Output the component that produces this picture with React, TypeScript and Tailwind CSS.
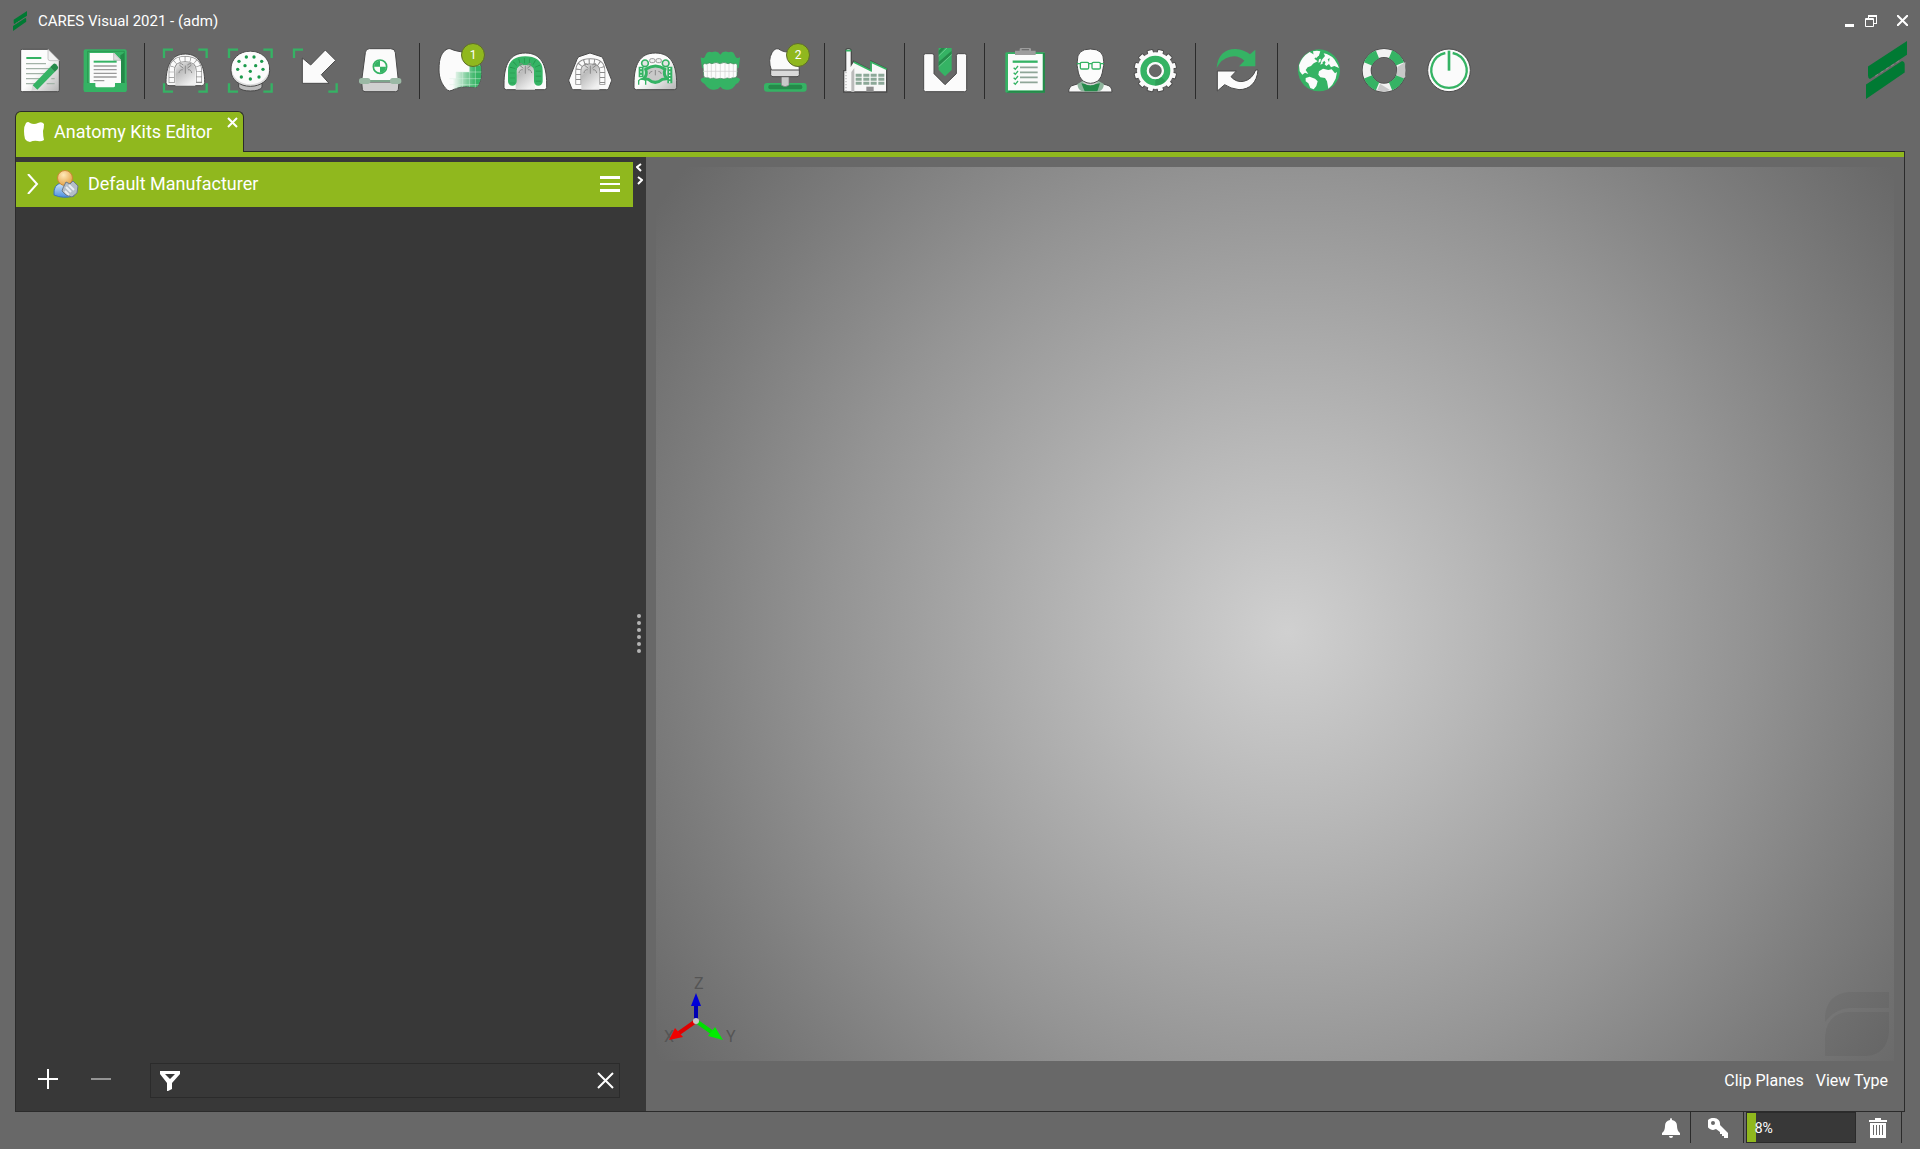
import React, { ReactNode, useState } from "react"

const GREEN = "#35b364"
const DARK_GREEN = "#258a4a"
const LINE = "#4a4a4a"

const Svg = ({ children }: { children: ReactNode }) => (
    <svg viewBox="0 0 132 132" className="size-11 overflow-visible" fill="none" aria-hidden="true">
        {children}
    </svg>
)

const Brackets = ({ diagonal = false }: { diagonal?: boolean }) => (
    <path
        d={diagonal ? "M3 30V5H30M131 106V131H106" : "M3 30V5H30M106 5H131V30M131 106V131H106M30 131H3V106"}
        stroke={GREEN}
        strokeWidth="7"
    />
)

const Shades = () => (
    <svg className="absolute size-0" aria-hidden="true">
        <defs>
            <linearGradient id="paper" x1="0" y1="0" x2="1" y2="1">
                <stop offset="0.5" stopColor="#fcfcfc" />
                <stop offset="1" stopColor="#b4b4b4" />
            </linearGradient>
            <linearGradient id="plaster" x1="0" y1="0" x2="0.6" y2="1">
                <stop offset="0" stopColor="#f4f4f4" />
                <stop offset="0.4" stopColor="#bcbcbc" />
                <stop offset="1" stopColor="#f0f0f0" />
            </linearGradient>
            <linearGradient id="mesh" x1="0" y1="0" x2="1" y2="0">
                <stop offset="0.1" stopColor={GREEN} stopOpacity="0" />
                <stop offset="0.8" stopColor={GREEN} />
            </linearGradient>
            <radialGradient id="head" cx="0.4" cy="0.3" r="0.8">
                <stop offset="0" stopColor="#ffe9b8" />
                <stop offset="1" stopColor="#e09b3c" />
            </radialGradient>
            <linearGradient id="body" x1="0" y1="0" x2="0" y2="1">
                <stop offset="0" stopColor="#d3e8fb" />
                <stop offset="1" stopColor="#4a8fe0" />
            </linearGradient>
        </defs>
    </svg>
)

const Palate = () => (
    <path
        d="M67 54V76M60 60L50 52M74 60L84 52M58 65Q50 64 48 74M76 65Q84 64 86 74M60 50Q56 46 51 47M74 50Q78 46 83 47"
        stroke="#8a8a8a"
        strokeWidth="3"
        strokeLinecap="round"
    />
)

const NewCaseIcon = () => (
    <Svg>
        <path d="M13 4H90L124 38V127Q124 131 119 131H13Q8 131 8 127V8Q8 4 13 4Z" fill="url(#paper)" stroke={LINE} strokeWidth="3" />
        <path d="M90 4V32Q90 38 96 38H124Z" fill="#f2f2f2" stroke="#b0b0b0" strokeWidth="2" />
        <path d="M25 30H70" stroke={GREEN} strokeWidth="6" />
        <path d="M24 47H84M24 62H98M24 77H92M24 92H70M24 107H56M86 107H110M100 92H110" stroke="#a3b3a8" strokeWidth="4" />
        <path d="M44 112L56 125L40 129Z" fill="#d8d8d8" />
        <path d="M96 58L110 72L58 125L44 112Z" fill={GREEN} />
        <path d="M96 58L106 48Q110 45 114 49L119 55Q122 59 119 63L110 72Z" fill={DARK_GREEN} />
    </Svg>
)

const OpenCaseIcon = () => (
    <Svg>
        <rect x="2" y="4" width="129" height="128" rx="6" fill={GREEN} />
        <path d="M112 22L124 14V105H112Z" fill={DARK_GREEN} />
        <path d="M14 10H124V105H14Z" stroke={DARK_GREEN} strokeWidth="2" />
        <path d="M20 15H94L114 36V120H20Z" fill="#fbfbfb" />
        <path d="M92 15V37H114Z" fill="#ddd" stroke="#aaa" strokeWidth="2" />
        <path d="M32 41H101" stroke={GREEN} strokeWidth="6" />
        <path d="M32 54H101M32 65H101M32 76H101M32 87H101M32 98H64" stroke="#9a9a9a" strokeWidth="4" />
        <path d="M2 105H37V114Q37 118 42 118H91Q96 118 96 114V105H131V126Q131 132 125 132H8Q2 132 2 126Z" fill={GREEN} />
    </Svg>
)

const ScanArchIcon = () => (
    <Svg>
        <Brackets />
        <path d="M9 104C9 55 24 18 67 18S125 55 125 104Q125 113 116 113H18Q9 113 9 104Z" fill="#f6f6f6" stroke={LINE} strokeWidth="3" />
        <path d="M37 113V70C37 50 48 42 67 42S97 50 97 70V113Z" fill="url(#plaster)" />
        <path d="M26 105V70C26 44 42 33 67 33S108 44 108 70V105" stroke="#8c8c8c" strokeWidth="18" />
        <path d="M26 103V70C26 44 42 33 67 33S108 44 108 70V103" stroke="#fbfbfb" strokeWidth="14" strokeDasharray="14 2" />
        <Palate />
    </Svg>
)

const dots = [[55, 27], [78, 27], [33, 40], [101, 40], [51, 53], [83, 53], [29, 64], [105, 64], [67, 70], [40, 87], [93, 87], [67, 93]]

const ScanBodyIcon = () => (
    <Svg>
        <Brackets />
        <path d="M32 104V118Q40 129 67 129T102 118V104Z" fill="#bdbdbd" stroke={LINE} strokeWidth="3" />
        <path d="M9 68C9 30 34 10 67 10S125 30 125 68C125 96 98 115 67 115S9 96 9 68Z" fill="#ddd" stroke={LINE} strokeWidth="3" />
        <ellipse cx="67" cy="60" rx="56" ry="49" fill="#fcfcfc" />
        {dots.map(([cx, cy]) => (
            <circle key={`${cx}-${cy}`} cx={cx} cy={cy} r="5" fill="#1c9a4c" />
        ))}
    </Svg>
)

const ImportIcon = () => (
    <Svg>
        <Brackets diagonal />
        <path d="M97 6L128 37L85 80L108 106H28V30L53 51Z" fill="#fbfbfb" stroke={LINE} strokeWidth="3" />
    </Svg>
)

const ScannerIcon = () => (
    <Svg>
        <path d="M11 102L13 124Q14 131 21 131H113Q120 131 121 124L123 102Z" fill="#d0d0d0" stroke={LINE} strokeWidth="3" />
        <path d="M34 2H98Q111 2 112 14L121 98H11L22 14Q23 2 34 2Z" fill="#fbfbfb" stroke={LINE} strokeWidth="3" />
        <path d="M30 99H104" stroke="#7ea58c" strokeWidth="6" />
        <rect x="3" y="90" width="34" height="18" rx="8" fill="#9bb9a5" />
        <rect x="96" y="90" width="34" height="18" rx="8" fill="#9bb9a5" />
        <circle cx="66" cy="56" r="20" stroke={GREEN} strokeWidth="5" />
        <path d="M66 56V38A18 18 0 0 0 48 56ZM66 56V74A18 18 0 0 0 84 56Z" fill={GREEN} />
    </Svg>
)

const toothPath = "M10 22C18 6 30-1 39 3C58 14 100 8 123 40C136 62 130 100 119 114Q116 119 108 118C80 113 60 118 42 127Q34 131 28 126C12 112 3 90 3 66C3 46 5 32 10 22Z"

const ToothIcon = () => (
    <Svg>
        <clipPath id="tooth-clip">
            <path d={toothPath} />
        </clipPath>
        <path d={toothPath} fill="#fbfbfb" stroke={LINE} strokeWidth="3" />
        <g clipPath="url(#tooth-clip)">
            <path d="M132 52H94V72H54V92H34V132H132Z" fill="url(#mesh)" />
            <path d="M54 72V132M74 72V132M94 52V132M112 52V132M34 92H132M54 72H132M34 110H132" stroke="#d9f2e2" strokeWidth="2" opacity="0.7" />
        </g>
    </Svg>
)

const modelPath = "M3 108C3 50 20 15 67 15S131 50 131 108V118Q131 125 124 125H10Q3 125 3 118Z"

const DentureIcon = () => (
    <Svg>
        <path d={modelPath} fill="#fbfbfb" stroke={LINE} strokeWidth="3" />
        <path d="M38 125V70C38 52 50 44 67 44S96 52 96 70V125Z" fill="url(#plaster)" />
        <path d="M28 100V68C28 46 44 38 67 38S106 46 106 68V100" stroke={GREEN} strokeWidth="26" strokeLinecap="round" />
        <path d="M28 106V68C28 46 44 38 67 38S106 46 106 68V106" stroke="#24934a" strokeWidth="16" strokeDasharray="2 13" />
        <Palate />
    </Svg>
)

const OrthoModelIcon = () => (
    <Svg>
        <path d="M66 15L100 26Q104 28 106 34L130 94Q131 97 130 100L122 121Q120 125 116 125H17Q13 125 11 121L3 100Q2 97 3 94L27 34Q29 28 33 26Z" fill="#fbfbfb" stroke={LINE} strokeWidth="3" />
        <path d="M40 125V70C40 52 50 44 67 44S94 52 94 70V125Z" fill="url(#plaster)" />
        <path d="M31 110V70C31 48 44 40 67 40S103 48 103 70V110" stroke="#8c8c8c" strokeWidth="18" />
        <path d="M31 108V70C31 48 44 40 67 40S103 48 103 70V108" stroke="#fbfbfb" strokeWidth="13" strokeDasharray="12 3" />
        <Palate />
    </Svg>
)

const PartialIcon = () => (
    <Svg>
        <path d={modelPath} fill="url(#paper)" stroke={LINE} strokeWidth="3" />
        <path d="M38 64Q44 82 32 92L46 94Q66 112 88 94L102 92Q90 80 96 64Q68 44 38 64Z" fill="#c9c9c9" stroke={GREEN} strokeWidth="9" />
        <path d="M17 56H32V88H17ZM103 56H118V106H103Z" fill={GREEN} />
        <path d="M24 60V88M110 60V104" stroke="#fff" strokeWidth="4" strokeDasharray="4 6" />
        <circle cx="36" cy="46" r="10" fill="#e4e4e4" stroke={GREEN} strokeWidth="5" />
        <circle cx="98" cy="46" r="10" fill="#e4e4e4" stroke={GREEN} strokeWidth="5" />
        <rect x="50" y="32" width="16" height="12" rx="5" fill="#f2f2f2" stroke="#999" strokeWidth="3" />
        <rect x="69" y="32" width="16" height="12" rx="5" fill="#f2f2f2" stroke="#999" strokeWidth="3" />
        <path d="M17 110V98Q28 86 38 98V110" stroke={GREEN} strokeWidth="4" />
        <path d="M67 66V82M58 70Q50 70 49 78M76 70Q84 70 85 78" stroke="#8a8a8a" strokeWidth="3" />
    </Svg>
)

const GumsIcon = () => (
    <Svg>
        <path d="M8 30Q8 26 12 30Q20 32 23 20Q28 8 42 13Q58 6 67 20Q76 6 92 13Q106 8 110 20Q114 32 121 30Q126 26 126 30L122 60H12Z" fill={GREEN} />
        <path d="M8 96Q8 90 20 88L30 84H104L114 88Q126 90 126 96Q122 106 114 108Q104 126 90 125Q76 128 67 116Q58 128 44 125Q30 124 20 108Q10 104 8 96Z" fill={GREEN} />
        <path d="M15 50Q20 44 26 48Q34 42 42 47Q54 40 66 47Q78 40 90 47Q98 42 106 48Q114 44 118 50L117 84Q112 92 104 89Q96 95 88 90Q78 95 67 91Q56 95 46 90Q38 95 30 89Q20 92 17 84Z" fill="#fcfcfc" stroke="#3c8055" strokeWidth="2" />
        <path d="M15 70H118M28 49V88M40 48V90M53 46V92M67 47V91M81 46V92M93 48V90M106 49V88" stroke="#cfcfcf" strokeWidth="2" />
    </Svg>
)

const ImplantIcon = () => (
    <Svg>
        <rect x="3" y="105" width="128" height="26" rx="9" fill={GREEN} />
        <rect x="16" y="110" width="102" height="14" rx="6" fill={DARK_GREEN} />
        <path d="M55 84H78V112Q66 120 55 112Z" fill="#c9c9c9" stroke="#777" strokeWidth="2" />
        <path d="M23 64H109V80Q109 86 102 86H30Q23 86 23 80Z" fill="#dadada" stroke={LINE} strokeWidth="3" />
        <path d="M27 14Q36-1 47 3Q66 16 84 10Q108 14 109 66H25Q14 36 27 14Z" fill="#fbfbfb" stroke={LINE} strokeWidth="3" />
    </Svg>
)

const FactoryIcon = () => (
    <Svg>
        <path d="M2 132V68H8V8Q8 2 16 2T25 8V50L32 39L84 66V39L131 62V132Z" fill="#f8f8f8" stroke={LINE} strokeWidth="4" />
        <path d="M8 8H25M32 42L84 68V42L131 64" stroke={GREEN} strokeWidth="5" />
        <path d="M25 72L34 60V132H25Z" fill="#bbb" />
        <path d="M9 72V130" stroke="#bbb" strokeWidth="4" strokeDasharray="4 5" />
        <path d="M38 82H56M61 82H79M83 82H101M106 82H124M38 94H56M61 94H79M83 94H101M106 94H124M38 106H56M61 106H79M83 106H101M106 106H124" stroke="#8ca898" strokeWidth="9" />
        <rect x="70" y="116" width="22" height="15" fill="#8f8f8f" />
    </Svg>
)

const MillingIcon = () => (
    <Svg>
        <path d="M8 17H27Q33 17 33 23V77L66 110L100 77V23Q100 17 106 17H125Q131 17 131 23V125Q131 131 125 131H8Q2 131 2 125V23Q2 17 8 17Z" fill="#fbfbfb" stroke={LINE} strokeWidth="3" />
        <path d="M47 0H86V66L66 85L47 66Z" fill={GREEN} />
        <path d="M47 8L55 0H66L47 20ZM47 42L86 8V18L47 54Z" fill={DARK_GREEN} />
        <path d="M47 24L72 0M47 56L86 20" stroke="#7fd29c" strokeWidth="2" />
    </Svg>
)

const ClipboardIcon = () => (
    <Svg>
        <rect x="7" y="13" width="119" height="121" rx="4" fill={GREEN} />
        <path d="M120 15H126V134H10L20 128H120Z" fill={DARK_GREEN} />
        <rect x="15" y="18" width="104" height="109" fill="#fbfbfb" />
        <path d="M36 8H50V3Q50 0 54 0H80Q84 0 84 3V8H98V21H36Z" fill="#9d9d9d" />
        <path d="M56 5H78" stroke="#6f6f6f" strokeWidth="4" />
        <path d="M29 41H104" stroke={GREEN} strokeWidth="7" />
        <path d="M51 58H104M51 73H104M51 88H104M51 103H104" stroke="#8fa698" strokeWidth="5" />
        <path d="M32 59L37 64L45 54M32 74L37 79L45 69M32 89L37 94L45 84M32 104L37 109L45 99" stroke={GREEN} strokeWidth="4" />
    </Svg>
)

const UserIcon = () => (
    <Svg>
        <path d="M2 132Q2 114 18 111L45 103H90L116 111Q132 114 132 132Z" fill="#f8f8f8" stroke={LINE} strokeWidth="3" />
        <path d="M45 98L28 108Q30 126 42 130H94Q106 126 108 108L90 98L67 112Z" fill="#8fb59d" />
        <path d="M40 106L67 112L96 106L88 130H50Z" fill={DARK_GREEN} />
        <path d="M46 84H88V104Q67 120 46 104Z" fill="#d3d3d3" />
        <path d="M28 40Q26 3 67 3T107 40Q108 54 105 62Q102 90 88 100Q67 112 47 100Q32 90 29 62Q26 54 28 40Z" fill="#fcfcfc" stroke={LINE} strokeWidth="3" />
        <path d="M26 47H37M62 47H72M97 47H108" stroke={GREEN} strokeWidth="4" />
        <rect x="37" y="43" width="25" height="20" rx="4" stroke={GREEN} strokeWidth="4" />
        <rect x="72" y="43" width="25" height="20" rx="4" stroke={GREEN} strokeWidth="4" />
    </Svg>
)

const teeth = [15, 45, 75, 105, 135, 165, 195, 225, 255, 285, 315, 345]

const GearIcon = () => (
    <Svg>
        {teeth.map((a) => (
            <rect key={a} x="58" y="4" width="18" height="20" rx="3" transform={`rotate(${a} 67 68)`} fill="#fbfbfb" stroke={LINE} strokeWidth="3" />
        ))}
        <circle cx="67" cy="68" r="55" fill="#fbfbfb" />
        <circle cx="67" cy="68" r="35" stroke={GREEN} strokeWidth="20" />
        <path d="M84 86L98 100A45 45 0 0 1 67 113V95Z" fill={DARK_GREEN} opacity="0.5" />
        <circle cx="67" cy="68" r="22" fill="#686868" stroke="#fbfbfb" strokeWidth="8" />
        <circle cx="67" cy="68" r="18" stroke={LINE} strokeWidth="2" />
    </Svg>
)

const RefreshIcon = () => (
    <Svg>
        <path d="M5 60C8 22 30 2 62 3Q88 5 105 19L121 5V55H72L88 38Q70 20 46 26Q18 32 5 60Z" fill={GREEN} />
        <path d="M129 66C126 104 104 125 72 125Q46 122 29 110L7 129V69H64L48 86Q64 104 86 100Q112 94 122 66Z" fill="#fbfbfb" stroke={LINE} strokeWidth="3" />
    </Svg>
)

const GlobeIcon = () => (
    <Svg>
        <circle cx="66" cy="67" r="63" fill={GREEN} />
        <g fill="#fbfbfb">
            <path d="M6 52Q14 26 38 12L48 18L60 24L52 32L62 40L50 46L42 54L32 58L26 66L34 78L24 74L16 80L8 70Z" />
            <path d="M48 10Q60 6 70 10L66 22L58 30L50 22Z" />
            <path d="M26 90L38 86L54 92L62 100L58 114L50 124L40 120L34 106L26 100Z" />
            <path d="M74 36L84 24L80 16Q100 20 112 34L122 50L126 60L112 54L102 58L96 48L88 54L80 46L70 50Z" />
            <path d="M66 70L78 62L94 66L104 64L114 76L120 72L116 92L106 110L94 122L90 100L84 90L70 88L64 80Z" />
            <path d="M66 34L72 32L70 42L64 44Z" />
        </g>
        <path d="M76 44L82 38L86 44L80 52ZM92 34L98 30L96 42ZM108 62L116 58L122 64L112 68Z" fill={GREEN} />
    </Svg>
)

const LifebuoyIcon = () => (
    <Svg>
        <circle cx="66" cy="67" r="52" stroke={LINE} strokeWidth="29" />
        <circle cx="66" cy="67" r="52" stroke="#f2f2f2" strokeWidth="24" />
        <path d="M107 56L130 42V86L124 94L103 80Z" fill="#c8c8c8" />
        <path d="M54 107L84 126L68 131L46 127Z" fill="#c8c8c8" />
        {[22, 112, 202, 292].map((a) => (
            <path key={a} d="M66 15A52 52 0 0 1 103 31" transform={`rotate(${a} 66 67)`} stroke={GREEN} strokeWidth="26" />
        ))}
    </Svg>
)

const PowerIcon = () => (
    <Svg>
        <circle cx="66" cy="67" r="64" fill="#fbfbfb" stroke={LINE} strokeWidth="3" />
        <path d="M55 15A53 53 0 1 0 77 15" stroke={GREEN} strokeWidth="7" />
        <path d="M66 8V68" stroke={GREEN} strokeWidth="8" />
    </Svg>
)

const Logo = ({ className }: { className: string }) => (
    <svg viewBox="0 0 124 175" className={className} fill="#007a33" aria-hidden="true">
        <path d="M124 0V41L12 115Q6 112 6 104V77Z" />
        <path d="M109 60Q117 62 117 69V95L0 175V131Z" />
        <path d="M28 106L106 56" stroke="#7d9484" strokeWidth="3" strokeDasharray="10 9" />
    </svg>
)

type Tool = { name: string; icon: ReactNode; badge?: number }

const groups: Tool[][] = [
    [
        { name: "New case", icon: <NewCaseIcon /> },
        { name: "Open case", icon: <OpenCaseIcon /> },
    ],
    [
        { name: "Scan model", icon: <ScanArchIcon /> },
        { name: "Scan body", icon: <ScanBodyIcon /> },
        { name: "Import scan", icon: <ImportIcon /> },
        { name: "Scanner", icon: <ScannerIcon /> },
    ],
    [
        { name: "Restoration", icon: <ToothIcon />, badge: 1 },
        { name: "Denture", icon: <DentureIcon /> },
        { name: "Model", icon: <OrthoModelIcon /> },
        { name: "Partial framework", icon: <PartialIcon /> },
        { name: "Articulation", icon: <GumsIcon /> },
        { name: "Abutment", icon: <ImplantIcon />, badge: 2 },
    ],
    [{ name: "Production", icon: <FactoryIcon /> }],
    [{ name: "Milling", icon: <MillingIcon /> }],
    [
        { name: "Orders", icon: <ClipboardIcon /> },
        { name: "Customers", icon: <UserIcon /> },
        { name: "Settings", icon: <GearIcon /> },
    ],
    [{ name: "Synchronize", icon: <RefreshIcon /> }],
    [
        { name: "Website", icon: <GlobeIcon /> },
        { name: "Support", icon: <LifebuoyIcon /> },
        { name: "Exit", icon: <PowerIcon /> },
    ],
]

const TitleBar = () => (
    <header className="flex h-[43px] items-center pb-[2px] pl-[13px] pr-3">
        <Logo className="h-5 w-[14px]" />
        <h1 className="ml-[11px] text-[15px] leading-5">CARES Visual 2021 - (adm)</h1>
        <div className="ml-auto flex items-center">
            <button aria-label="Minimize" className="flex h-3 w-[9px] items-end">
                <span className="h-[3px] w-full bg-white" />
            </button>
            <button aria-label="Restore" className="ml-[11px]">
                <svg viewBox="0 0 12 12" className="size-3" fill="none" stroke="#fff" aria-hidden="true">
                    <path d="M.5 3.5H8.5V11.5H.5ZM0 4.5H9M3 1.5H12M11.5 0V9M9 8.5H12M3.5 0V3M3 .5H12" />
                </svg>
            </button>
            <button aria-label="Close" className="ml-5">
                <svg viewBox="0 0 11 11" className="size-[11px]" stroke="#fff" strokeWidth="2" aria-hidden="true">
                    <path d="M0 0L11 11M11 0L0 11" />
                </svg>
            </button>
        </div>
    </header>
)

const Toolbar = () => (
    <nav aria-label="Main" className="flex h-14 pl-[7px] pr-[13px]">
        {groups.map((tools, i) => (
            <div key={tools[0].name} className="flex">
                {i > 0 && (
                    <div className={i > 5 ? "flex w-[17px] justify-center" : "flex w-[15px] justify-center"}>
                        <span className="w-px bg-[#2b2b2b]" />
                    </div>
                )}
                {tools.map((tool) => (
                    <button key={tool.name} aria-label={tool.name} className="relative flex w-[65px] justify-center pt-[5px]">
                        {tool.icon}
                        {tool.badge && (
                            <span className="absolute right-[7px] top-0 size-6 rounded-full border border-[#5d6b2c] bg-[#90b81e] text-center text-xs leading-[22px]">
                                {tool.badge}
                            </span>
                        )}
                    </button>
                ))}
            </div>
        ))}
        <Logo className="-mt-[2px] ml-auto h-[58px] w-[41px]" />
    </nav>
)

const Tab = () => (
    <div className="relative z-10 -mb-px flex h-[41px] items-center self-start rounded-t-md border border-b-0 border-[#2b2b2b] bg-[#90b81e] pl-2">
        <svg viewBox="0 0 20 20" className="size-5" fill="#fff" aria-hidden="true">
            <path d="M2 1Q4-1 6 1Q10 3 14 1Q18-1 20 2Q20 6 19 9Q19 14 20 18Q17 20 14 19Q10 18 6 20Q3 20 1 17Q0 13 0 9Q0 4 2 1Z" />
        </svg>
        <h2 className="ml-[10px] text-lg leading-6">Anatomy Kits Editor</h2>
        <button aria-label="Close tab" className="ml-[15px] mr-[5px] self-start pt-[5px]">
            <svg viewBox="0 0 11 11" className="size-[11px]" stroke="#fff" strokeWidth="2" aria-hidden="true">
                <path d="M1 1L10 10M10 1L1 10" />
            </svg>
        </button>
    </div>
)

const Sidebar = () => {
    const [filter, setFilter] = useState("")

    return (
        <aside className="flex w-[630px] shrink-0 bg-[#383838]">
            <div className="flex flex-1 flex-col pt-[5px]">
                <div className="flex h-[45px] items-center bg-[#90b81e] pb-px pl-[11px] pr-[13px]">
                    <button aria-label="Expand">
                        <svg viewBox="0 0 12 20" className="h-5 w-3" fill="none" stroke="#fff" strokeWidth="2" aria-hidden="true">
                            <path d="M1 0L10 10L1 20" />
                        </svg>
                    </button>
                    <svg viewBox="0 0 26 28" className="ml-[14px] h-7 w-[26px]" aria-hidden="true">
                        <path d="M1 25Q0 14 9 13H15Q21 15 21 26Q10 29 1 25Z" fill="url(#body)" stroke="#3c74b8" />
                        <circle cx="12" cy="8" r="7.5" fill="url(#head)" stroke="#c98a35" />
                        <path d="M10 18L13 12L17 14L20 11L25 16L24 23L19 27L13 25L9 21Z" fill="#b4bec8" stroke="#6d7b88" />
                        <path d="M13 17L18 22M16 15L21 20M12 21L16 25" stroke="#e8edf2" strokeWidth="2" />
                    </svg>
                    <span className="ml-[9px] text-lg leading-6">Default Manufacturer</span>
                    <button aria-label="Manufacturer menu" className="ml-auto flex flex-col gap-1">
                        <span className="h-[3px] w-5 bg-white" />
                        <span className="h-[2px] w-5 bg-white" />
                        <span className="h-[3px] w-5 bg-white" />
                    </button>
                </div>
                <div className="mb-[13px] mt-auto flex items-center pl-[22px] pr-[13px]">
                    <button aria-label="Add">
                        <svg viewBox="0 0 20 20" className="mb-1 size-5" stroke="#fff" strokeWidth="2" aria-hidden="true">
                            <path d="M10 0V20M0 10H20" />
                        </svg>
                    </button>
                    <button aria-label="Remove" disabled className="ml-[33px]">
                        <svg viewBox="0 0 20 20" className="mb-1 size-5" stroke="#949494" strokeWidth="2" aria-hidden="true">
                            <path d="M0 10H20" />
                        </svg>
                    </button>
                    <div className="ml-[39px] flex h-[35px] flex-1 items-center border border-[#2b2b2b] pl-[9px] pr-[5px]">
                        <svg viewBox="0 0 20 20" className="size-5" fill="#fff" aria-hidden="true">
                            <path d="M0 0H20V3L12 12V18L8 20H7V12L0 3ZM5 3L10 8L15 3Z" fillRule="evenodd" />
                        </svg>
                        <input
                            aria-label="Filter"
                            value={filter}
                            onChange={(e) => setFilter(e.target.value)}
                            className="mx-2 min-w-0 flex-1 bg-transparent outline-none"
                        />
                        <button aria-label="Clear filter" onClick={() => setFilter("")}>
                            <svg viewBox="0 0 17 17" className="size-[17px]" stroke="#fff" strokeWidth="2" aria-hidden="true">
                                <path d="M1 1L16 16M16 1L1 16" />
                            </svg>
                        </button>
                    </div>
                </div>
            </div>
            <div className="flex w-[13px] flex-col items-center pr-px pt-[6px]">
                <svg viewBox="0 0 7 23" className="h-[23px] w-[7px]" fill="none" stroke="#fff" strokeWidth="2" aria-hidden="true">
                    <path d="M5 1L1 4L5 8M2 14L6 17L2 21" />
                </svg>
                <div className="-mt-[30px] flex flex-1 flex-col items-center justify-center gap-[3px]">
                    {[0, 1, 2, 3, 4, 5].map((n) => (
                        <span key={n} className="size-1 rounded-full bg-[#b4b4b4]" />
                    ))}
                </div>
            </div>
        </aside>
    )
}

const Viewer = () => (
    <section className="flex flex-1 flex-col px-[10px] pt-[10px]">
        <div className="relative flex-1 bg-[radial-gradient(circle_at_51%_52%,#d0d0d0,#b8b8b8_24%,#949494_58%,#7d7d7d_78%,#686868_97%)]">
            <svg viewBox="0 0 80 80" className="absolute bottom-2 left-[7px] size-20 overflow-visible" aria-hidden="true">
                <g fill="#555" fontFamily="Roboto, sans-serif" fontSize="16">
                    <text x="31" y="16">Z</text>
                    <text x="1" y="69">X</text>
                    <text x="63" y="69">Y</text>
                </g>
                <path d="M33 48V31" stroke="#0000b4" strokeWidth="4" />
                <path d="M33 20L38 33H28Z" fill="#0000d8" />
                <path d="M33 48L16 60" stroke="#e00000" strokeWidth="4" />
                <path d="M6 67L12 55L20 64Z" fill="#f00000" />
                <path d="M33 48L50 60" stroke="#00e000" strokeWidth="4" />
                <path d="M60 67L45 63L52 54Z" fill="#00ee00" />
                <circle cx="33" cy="48" r="3" fill="#c8c8c8" />
            </svg>
            <svg viewBox="0 0 64 64" className="absolute bottom-[5px] right-[5px] size-16" fill="#000" fillOpacity="0.05" aria-hidden="true">
                <path d="M0 30V24Q2 2 24 0H64V16H24Q10 17 0 30Z" />
                <path d="M0 64V44Q2 22 22 20H64V40Q62 62 42 64Z" />
            </svg>
        </div>
        <div className="flex h-[50px] items-center justify-end gap-3 px-[6px] pb-[10px] text-base leading-5">
            <button>Clip Planes</button>
            <button>View Type</button>
        </div>
    </section>
)

const StatusBar = () => (
    <footer className="flex h-[37px] items-start justify-end pr-[18px]">
        <button aria-label="Notifications" className="flex h-[31px] w-10 items-center justify-center border-r border-[#2b2b2b] pl-px">
            <svg viewBox="0 0 18 20" className="h-5 w-[18px]" fill="#fff" aria-hidden="true">
                <path d="M9 0Q10 0 10 2Q15 3 15 8Q15 13 18 15V17H0V15Q3 13 3 8Q3 3 8 2Q8 0 9 0ZM7 18H11Q11 20 9 20T7 18Z" />
            </svg>
        </button>
        <button aria-label="License" className="flex h-[31px] w-[53px] items-center justify-center border-r border-[#2b2b2b] pl-px">
            <svg viewBox="0 0 20 20" className="size-5" fill="#fff" aria-hidden="true">
                <path d="M6 0A6 6 0 0 1 12 7L20 15V20H16V18H14V16H12V14L8 11A6 6 0 1 1 6 0ZM5 3A2 2 0 1 0 5 7A2 2 0 0 0 5 3Z" fillRule="evenodd" />
            </svg>
        </button>
        <div role="progressbar" aria-label="Memory" aria-valuenow={8} className="ml-[2px] flex h-[31px] w-[110px] items-center border border-[#2b2b2b] bg-[#383838]">
            <span className="h-full bg-[#90b81e]" style={{ width: "8%" }} />
            <span className="-ml-px text-sm leading-5">8%</span>
        </div>
        <button aria-label="Delete" className="flex h-[31px] w-[46px] items-center justify-center border-r border-[#2b2b2b] pr-[2px]">
            <svg viewBox="0 0 18 20" className="h-5 w-[18px]" fill="#fff" aria-hidden="true">
                <path d="M6 0H12V2H18V4H0V2H6ZM1 5H17V20H1ZM4 7V17H5V7ZM7 7V17H8V7ZM10 7V17H11V7ZM13 7V17H14V7Z" fillRule="evenodd" />
            </svg>
        </button>
    </footer>
)

const App = () => {
    return (
        <div className="flex min-h-screen flex-col bg-[#686868] font-[Roboto,sans-serif] text-white">
            <Shades />
            <TitleBar />
            <Toolbar />
            <main className="mx-[15px] mt-3 flex flex-1 flex-col">
                <Tab />
                <div className="flex flex-1 flex-col border border-[#2b2b2b]">
                    <div className="h-[5px] shrink-0 bg-[#90b81e]" />
                    <div className="flex flex-1">
                        <Sidebar />
                        <Viewer />
                    </div>
                </div>
            </main>
            <StatusBar />
        </div>
    )
}

export default App
